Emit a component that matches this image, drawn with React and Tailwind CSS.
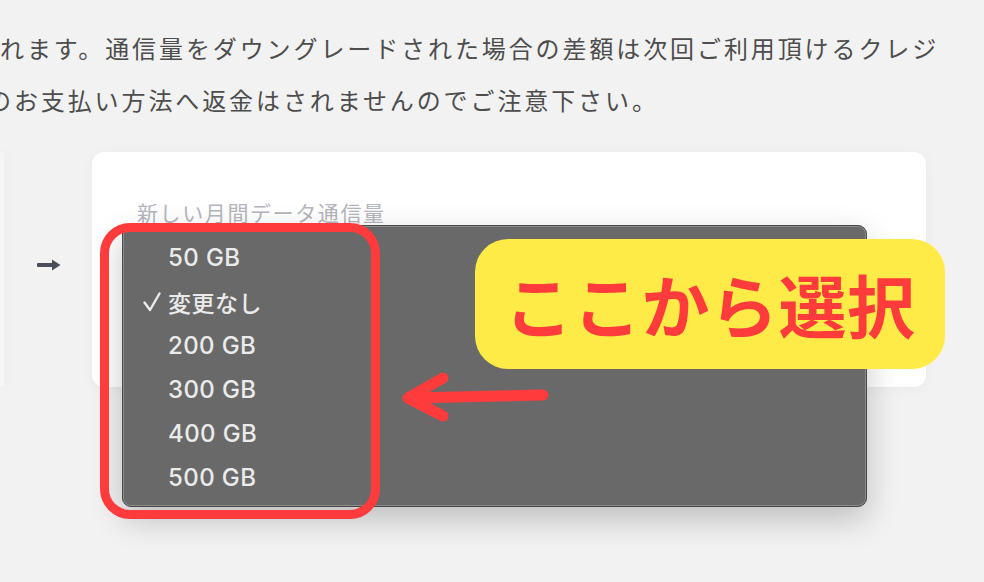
const options = [
  { label: "50 GB" },
  { label: "変更なし", checked: true },
  { label: "200 GB" },
  { label: "300 GB" },
  { label: "400 GB" },
  { label: "500 GB" },
];

const SmallArrow = () => (
  <svg width="24" height="12" viewBox="0 0 24 12">
    <rect x="0" y="4" width="16" height="4" rx="1" fill="#4a4f57" />
    <path d="M15 0.5 L23.5 6 L15 11.5 Z" fill="#4a4f57" />
  </svg>
);

const Check = () => (
  <svg width="18" height="20" viewBox="0 0 18 20">
    <path d="M1.5 10.5 L7 18 L16.5 1.5" stroke="#ebebeb" strokeWidth="2.4" fill="none" strokeLinecap="round" strokeLinejoin="round" />
  </svg>
);

const RedArrow = () => (
  <svg width="160" height="65" viewBox="0 0 160 65">
    <g stroke="#ff3b3b" strokeWidth="11" strokeLinecap="round" strokeLinejoin="round" fill="none">
      <path d="M148 30 C110 31 60 32 14 33" />
      <path d="M48 13 L13 33 L48 51" />
    </g>
  </svg>
);

export default function App() {
  return (
    <div className="relative w-[984px] h-[582px] overflow-hidden bg-[#f2f2f2] font-['Noto_Sans_CJK_JP',sans-serif]">
      {/* notice text, cut off on the left */}
      <div className="pt-[22px] text-[24px] leading-[52px] tracking-[2.9px] text-[#4d4d4d] whitespace-nowrap">
        <p>れます。通信量をダウングレードされた場合の差額は次回ご利用頂けるクレジ</p>
        <p className="-ml-[13px]">のお支払い方法へ返金はされませんのでご注意下さい。</p>
      </div>

      <div className="flex mt-[26px]">
        <div className="w-[4px] h-[235px] bg-[#f6f6f6] rounded-r-[10px] shadow-[3px_0_12px_rgba(0,0,0,0.05)]" />
        <div className="ml-[33px] mt-[107px] self-start">
          <SmallArrow />
        </div>
        <div className="ml-[31px] w-[834px] h-[235px] bg-white rounded-[12px] shadow-[0_2px_14px_rgba(0,0,0,0.04)] pt-[45px] pl-[45px]">
          <p className="text-[21px] leading-[30px] tracking-[1.6px] text-[#b5b5bd]">新しい月間データ通信量</p>
        </div>
      </div>

      {/* open select menu */}
      <div className="absolute left-[122px] top-[225px] w-[745px] h-[282px] rounded-[9px] bg-[#696969] border border-[#4a4a4a] shadow-[inset_0_0_0_1px_rgba(255,255,255,0.22),0_12px_32px_rgba(0,0,0,0.22)] pt-[10px] font-['Inter','Noto_Sans_CJK_JP',sans-serif]">
        {options.map((o) => (
          <div key={o.label} className="flex items-center h-[44px] text-[24px] font-medium text-[#ebebeb] tracking-[0.4px]">
            <span className="w-[45px] pl-[20px] flex items-center">{o.checked ? <Check /> : null}</span>
            <span className={o.checked ? "font-['Noto_Sans_CJK_JP',sans-serif] text-[23px] tracking-[0.5px]" : ""}>{o.label}</span>
          </div>
        ))}
      </div>

      {/* annotation */}
      <div className="absolute left-[100px] top-[223px] w-[280px] h-[296px] rounded-[30px] border-[9px] border-[#ff3b3b]" />
      <div className="absolute left-[395px] top-[365px]">
        <RedArrow />
      </div>
      <div className="absolute left-[475px] top-[239px] w-[470px] h-[130px] rounded-[33px] bg-[#ffeb47] flex items-center justify-center">
        <span className="text-[68px] font-bold leading-none tracking-[0.5px] text-[#ff3b3b]">ここから選択</span>
      </div>
    </div>
  );
}
